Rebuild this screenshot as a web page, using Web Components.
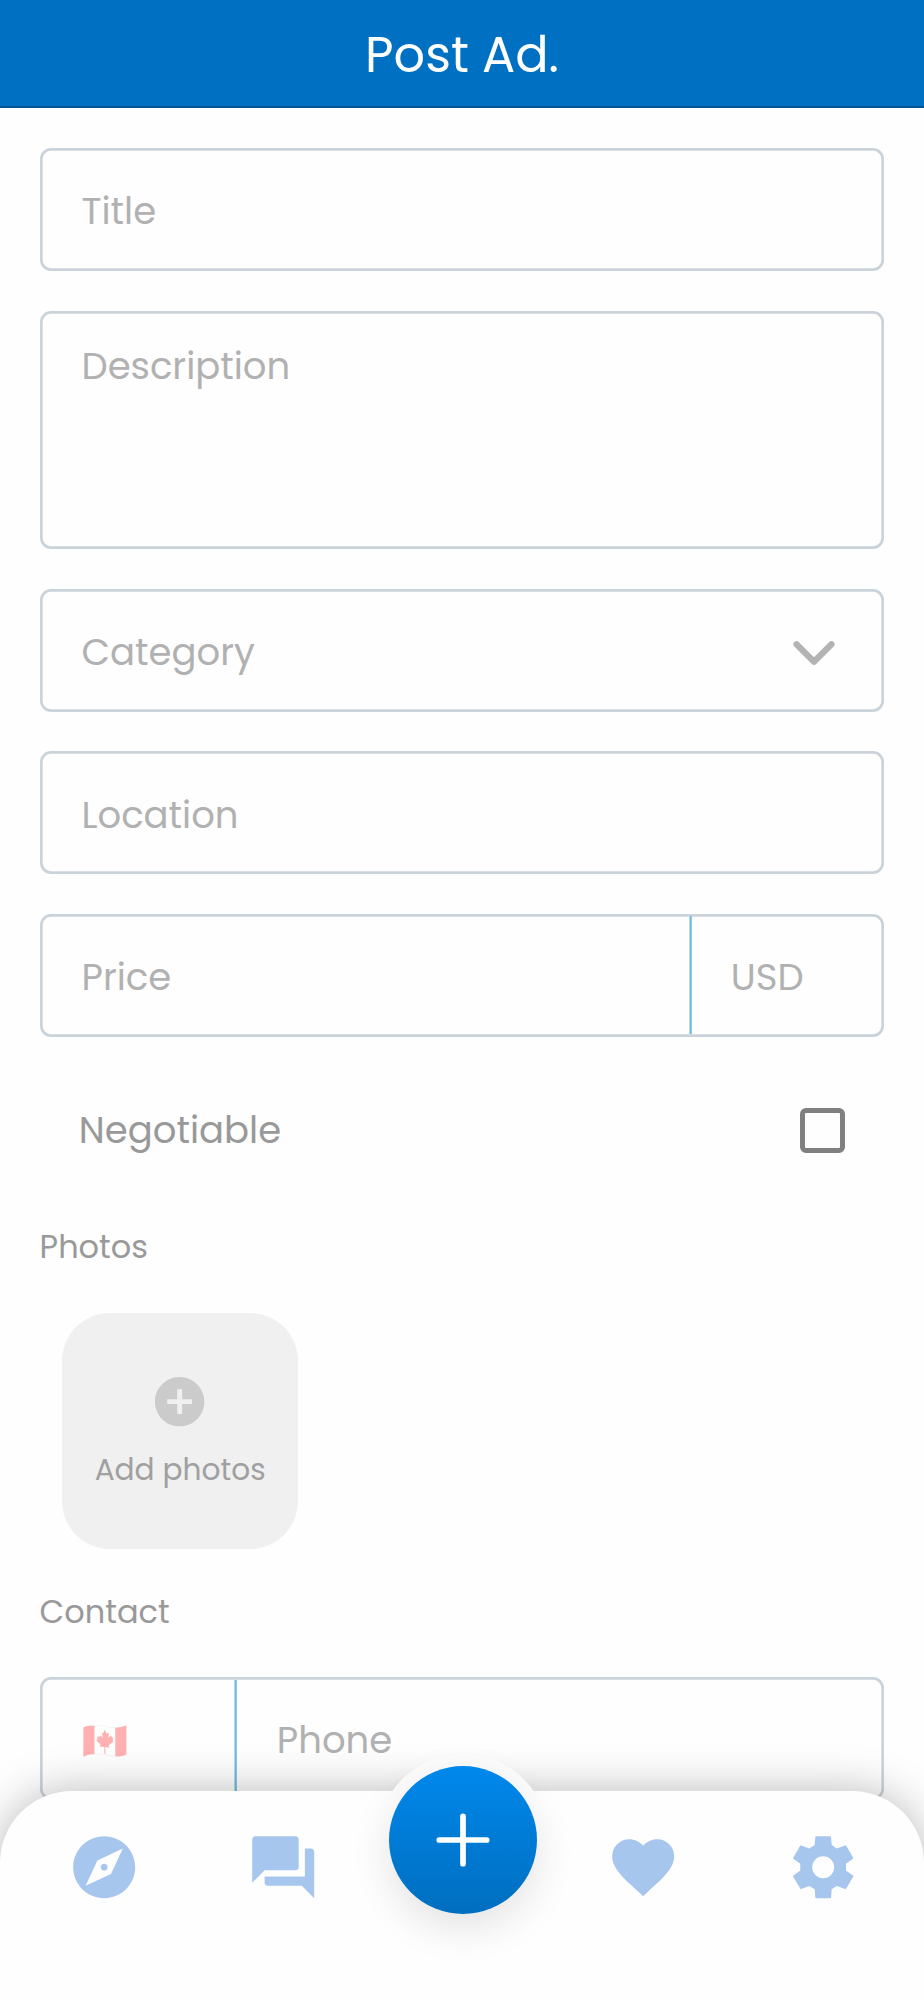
<!DOCTYPE html>
<html lang="en">
<head>
<meta charset="utf-8">
<title>Post Ad.</title>
<style>
html,body{margin:0;background:#fefefe;height:2000px;overflow:hidden}
body{font-family:"Poppins","Inter",sans-serif;color:#b1b1b1}
</style>
</head>
<body>
<post-ad-page></post-ad-page>
<script>
const define = (name, html, setup) => customElements.define(name, class extends HTMLElement {
  connectedCallback() {
    if (this.shadowRoot) return;
    const t = document.createElement('template');
    t.innerHTML = html;
    this.attachShadow({ mode: 'open' }).appendChild(t.content.cloneNode(true));
    if (setup) setup(this, this.shadowRoot);
  }
});

define('text-label', `<style>
:host{display:block;white-space:nowrap;line-height:1.2;font-weight:400}
</style><slot></slot>`);

define('app-header', `<style>
:host{display:flex;box-sizing:border-box;height:108.3px;background:linear-gradient(#0070c3,#0070c3) 0 0/100% 106px no-repeat,#075292;align-items:center;justify-content:center;padding:0;color:#fff;font-size:49.3px}
</style><slot></slot>`);

define('form-field', `<style>
:host{display:flex;box-sizing:border-box;height:var(--h,122.7px);border-radius:11px;box-shadow:inset 0 0 0 2.7px #cbd3da;font-size:37px;padding:2.5px}
.lead{display:flex;align-items:center;box-sizing:border-box;width:var(--lead,100%);padding:4px 0 0 39.2px}
.trail{display:none;flex:1;align-items:center;padding:4px 0 0 var(--trail,38.5px)}
:host([split]) .lead{background:linear-gradient(90deg,#b5dcee 1px,#70bbdd 1px 2px,#8ac8e3 2px) 100% 0/3px 100% no-repeat}
:host([split]) .trail{display:flex}
:host([tall]) .lead{align-items:flex-start;padding-top:31px}
:host([select]) .lead{justify-content:space-between;padding-right:46.6px}
</style><div class="lead"><slot></slot></div><div class="trail"><slot name="trail"></slot></div>`);

define('chevron-icon', `<style>:host{display:block;width:42px;height:26px}svg{display:block}</style>
<svg width="42" height="26" viewBox="0 0 42 26"><path d="M3.5 5.2 21 22.7 38.5 5.2" fill="none" stroke="#b3b3b3" stroke-width="6.2" stroke-linecap="round" stroke-linejoin="round"/></svg>`);

define('canada-flag', `<style>:host{display:block;width:44px;height:34px;margin-left:1.2px}svg{display:block}</style>
<svg width="44" height="34" viewBox="0 0 132 102">
<path d="M34 5C62 3 76 12 98 11V95C76 97 62 89 34 90Z" fill="#fefefe" stroke="#eee" stroke-width="2"/>
<path d="M1 10Q17 3 34 5V91Q17 90 1 98ZM97 11Q116 11 130 4V92Q116 99 97 97Z" fill="#ffb0b1"/>
<path d="M65 17 71 29 78 26 76 42 84 34 88 41 91 40 89 49 91 53 77 64 79 71 67 69 67 90H64L64 68 50 68 53 62 40 49 44 46 42 37 49 39 52 34 60 42 56 25 61 28Z" fill="#ffb0b1"/></svg>`);

define('check-row', `<style>
:host{display:flex;justify-content:space-between;align-items:center;height:60px;padding:0 39px 0 39px;color:#999;font-size:37px}
i{display:block;box-sizing:border-box;width:45px;height:45px;border:5px solid #808080;border-radius:6px;margin-top:1px}
</style><slot></slot><i></i>`);

define('section-label', `<style>:host{display:block;color:#999;font-size:32px;height:38px;margin-left:-.2px}</style><slot></slot>`);

define('photo-tile', `<style>
:host{display:flex;flex-direction:column;align-items:center;box-sizing:border-box;width:236.3px;height:236.3px;margin-left:22.2px;border-radius:48px;background:#f0f0f0;color:#a0a0a0;font-size:29.6px;padding-top:58.7px}
svg{display:block;width:59.3px;height:59.3px;margin-bottom:21.6px}
</style><svg viewBox="0 0 24 24" fill="#cbcbcb"><path d="M12 2C6.48 2 2 6.48 2 12s4.48 10 10 10 10-4.48 10-10S17.52 2 12 2zm5 11h-4v4h-2v-4H7v-2h4V7h2v4h4v2z"/></svg><slot></slot>`);

const ICONS = {
  explore: 'M12 10.9c-.61 0-1.1.49-1.1 1.1s.49 1.1 1.1 1.1c.61 0 1.1-.49 1.1-1.1s-.49-1.1-1.1-1.1zM12 2C6.48 2 2 6.48 2 12s4.48 10 10 10 10-4.48 10-10S17.52 2 12 2zm2.19 12.19L6 18l3.81-8.19L18 6l-3.81 8.19z',
  forum: 'M21 6h-2v9H6v2c0 .55.45 1 1 1h11l4 4V7c0-.55-.45-1-1-1zm-4 6V3c0-.55-.45-1-1-1H3c-.55 0-1 .45-1 1v14l4-4h10c.55 0 1-.45 1-1z',
  favorite: 'M12 20.3C5.4 14.6 2 11.2 2 7.7V8.4C2 5.3 4.4 3 7.5 3c1.74 0 3.41.81 4.5 2.09C13.09 3.81 14.76 3 16.5 3 19.58 3 22 5.3 22 8.4c0 3.4-3.1 6.7-10 12.9z',
  settings: 'M9.73 2H14.27Q14.5 2 14.53 2.25L14.75 4.85 16.4 5.95 19.05 4.98Q19.3 4.9 19.43 5.1L21.68 8.95Q21.8 9.15 21.6 9.3L19.35 10.9V13.1L21.6 14.7Q21.8 14.85 21.68 15.05L19.43 18.9Q19.3 19.1 19.05 19.02L16.4 18.05 14.75 19.15 14.53 21.75Q14.5 22 14.27 22H9.73Q9.5 22 9.47 21.75L9.25 19.15 7.5 18.05 4.95 19.02Q4.7 19.1 4.57 18.9L2.32 15.05Q2.2 14.85 2.4 14.7L4.6 13.1V10.9L2.4 9.3Q2.2 9.15 2.32 8.95L4.57 5.1Q4.7 4.9 4.95 4.98L7.5 5.95 9.25 4.85 9.47 2.25Q9.5 2 9.73 2ZM12 8.45A3.55 3.55 0 1 0 12 15.55 3.55 3.55 0 1 0 12 8.45Z'
};
ICONS.favorite = 'M12 21.35l-1.45-1.32C5.4 15.36 2 12.28 2 8.5 2 5.42 4.42 3 7.5 3c1.74 0 3.41.81 4.5 2.09C13.09 3.81 14.76 3 16.5 3 19.58 3 22 5.42 22 8.5c0 3.78-3.4 6.86-8.55 11.54L12 21.35z';

define('nav-icon', `<style>:host{display:block;width:74.4px;height:74.4px}svg{display:block;width:100%;height:100%}</style>
<svg viewBox="0 0 24 24" fill="#a7c6ed" fill-rule="evenodd"><path/></svg>`, (el, root) => {
  root.querySelector('path').setAttribute('d', ICONS[el.getAttribute('name')]);
});

define('add-button', `<style>
:host{display:block;position:relative;width:172px;height:172px}
.ring{position:absolute;inset:0;border-radius:50%;background:linear-gradient(#fcfcfc 0,#fcfcfc 18%,#fefefe 28%)}
.disc{position:absolute;inset:12px;border-radius:50%;background:linear-gradient(#0088ec,#006ebf);box-shadow:0 14px 40px rgba(0,0,0,.11);display:grid;place-items:center}
svg{display:block}
</style><div class="ring"></div><div class="disc"><svg width="54" height="54" viewBox="0 0 54 54"><path d="M27 3.3v47.4M3.3 27h47.4" stroke="#fff" stroke-width="5.7" stroke-linecap="round"/></svg></div>`);

define('bottom-nav', `<style>
:host{position:absolute;left:0;right:0;bottom:0;height:209.4px;display:block}
.bar{box-sizing:border-box;height:100%;background:#fefefe;border-radius:72px 72px 0 0;box-shadow:0 0 45px rgba(0,0,0,.27);display:grid;grid-template-columns:repeat(5,179.8px);padding:39.2px 0 0 13.9px;justify-items:center;align-items:start}
add-button{margin-top:-76px}
</style><div class="bar"><nav-icon name="explore"></nav-icon><nav-icon name="forum"></nav-icon><add-button></add-button><nav-icon name="favorite"></nav-icon><nav-icon name="settings"></nav-icon></div>`);

define('post-ad-page', `<style>
:host{display:block;position:relative;width:924px;height:2000px;overflow:hidden;background:#fefefe}
main{display:flex;flex-direction:column;padding:39.8px 39.8px 0}
form-field{margin-bottom:39.8px}
check-row{margin-top:24px}
.p{margin-top:68px}
photo-tile{margin-top:46.4px}
.c{margin-top:43.6px}
.ph{margin-top:46.6px}
</style>
<app-header><text-label>Post Ad.</text-label></app-header>
<main>
<form-field><text-label>Title</text-label></form-field>
<form-field tall style="--h:238.6px"><text-label>Description</text-label></form-field>
<form-field select><text-label>Category</text-label><chevron-icon></chevron-icon></form-field>
<form-field><text-label>Location</text-label></form-field>
<form-field split style="--lead:650px"><text-label>Price</text-label><text-label slot="trail">USD</text-label></form-field>
<check-row><text-label>Negotiable</text-label></check-row>
<section-label class="p"><text-label>Photos</text-label></section-label>
<photo-tile><text-label>Add photos</text-label></photo-tile>
<section-label class="c"><text-label>Contact</text-label></section-label>
<form-field class="ph" split style="--lead:194.5px;--trail:40px"><canada-flag></canada-flag><text-label slot="trail">Phone</text-label></form-field>
</main>
<bottom-nav></bottom-nav>`);
</script>
</body>
</html>
